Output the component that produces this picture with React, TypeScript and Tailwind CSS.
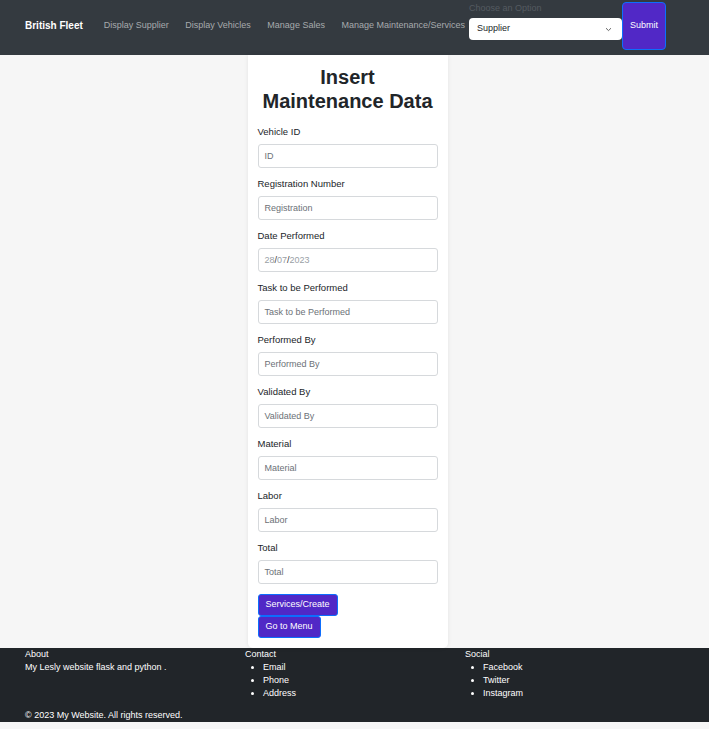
import React from "react";

const fields: { label: string; ph: string; date?: boolean }[] = [
  { label: "Vehicle ID", ph: "ID" },
  { label: "Registration Number", ph: "Registration" },
  { label: "Date Performed", ph: "", date: true },
  { label: "Task to be Performed", ph: "Task to be Performed" },
  { label: "Performed By", ph: "Performed By" },
  { label: "Validated By", ph: "Validated By" },
  { label: "Material", ph: "Material" },
  { label: "Labor", ph: "Labor" },
  { label: "Total", ph: "Total" },
];

export default function App() {
  return (
    <div className="min-h-[729px] bg-[#f6f6f6] text-[#212529]" style={{ fontFamily: '"Liberation Sans", Arial, sans-serif' }}>
      <nav className="h-[55px] bg-[#343a40] flex items-start">
        <div className="flex items-center h-[51px] pl-[25px]">
          <span className="text-white font-bold text-[10px]">British Fleet</span>
          <span className="ml-[21px] text-[#a7aaad] text-[9px]">Display Supplier</span>
          <span className="ml-[16.5px] text-[#a7aaad] text-[9px]">Display Vehicles</span>
          <span className="ml-[16.5px] text-[#a7aaad] text-[9px]">Manage Sales</span>
          <span className="ml-[16.5px] text-[#a7aaad] text-[9px]">Manage Maintenance/Services</span>
        </div>
        <div className="ml-[4px] flex flex-col">
          <span className="text-[9px] text-[#545a61] leading-[13px] mt-[2px]">Choose an Option</span>
          <div className="mt-[3px] w-[153px] h-[22px] bg-white rounded-[4px] flex items-center justify-between pl-[8px] pr-[10px]">
            <span className="text-[9px] text-[#212529]">Supplier</span>
            <svg width="7" height="5" viewBox="0 0 7 5"><path d="M1 1.2 L3.5 3.6 L6 1.2" fill="none" stroke="#555" strokeWidth="0.9" /></svg>
          </div>
        </div>
        <button className="mt-[2px] w-[44px] h-[48px] bg-[#5128c6] border border-[#0d6efd] rounded-[4px] text-white text-[9px]">Submit</button>
      </nav>

      <main className="flex justify-center pr-[14px]">
        <div className="w-[200px] bg-white rounded-b-[5px] shadow-[0_0_4px_rgba(0,0,0,0.08)] px-[10px] pt-[10px] pb-[10px]">
          <h1 className="text-center font-bold text-[20px] leading-[24px] text-[#212529]">Insert<br />Maintenance Data</h1>
          <div className="mt-[13px] flex flex-col">
            {fields.map((f, i) => (
              <div key={i} className={i > 0 ? "mt-[10px]" : ""}>
                <div className="text-[9.5px] leading-[12px] text-[#212529]">{f.label}</div>
                <div className="mt-[6px] h-[24px] border border-[#d6d9dc] rounded-[3px] flex items-center pl-[6px] pt-[1px] text-[9px]">
                  {f.date ? (
                    <span>
                      <span className="text-[#9aa0a6]">28</span>
                      <span className="text-[#333]">/</span>
                      <span className="text-[#9aa0a6]">07</span>
                      <span className="text-[#333]">/</span>
                      <span className="text-[#9aa0a6]">2023</span>
                    </span>
                  ) : (
                    <span className="text-[#6c7177]">{f.ph}</span>
                  )}
                </div>
              </div>
            ))}
          </div>
          <div className="mt-[10px] flex flex-col items-start">
            <button className="h-[22px] px-[7px] bg-[#5128c6] border border-[#0d6efd] rounded-[3px] text-white text-[9px]">Services/Create</button>
            <button className="h-[22px] px-[7px] bg-[#5128c6] border border-[#0d6efd] rounded-[3px] text-white text-[9px]">Go to Menu</button>
          </div>
        </div>
      </main>

      <footer className="bg-[#212529] text-white text-[9px] leading-[13px] px-[25px] h-[74px]">
        <div className="grid grid-cols-[220px_220px_220px]">
          <div>
            <div>About</div>
            <div>My Lesly website flask and python .</div>
          </div>
          <div>
            <div>Contact</div>
            <ul className="list-disc pl-[18px]">
              <li>Email</li>
              <li>Phone</li>
              <li>Address</li>
            </ul>
          </div>
          <div>
            <div>Social</div>
            <ul className="list-disc pl-[18px]">
              <li>Facebook</li>
              <li>Twitter</li>
              <li>Instagram</li>
            </ul>
          </div>
        </div>
        <div className="mt-[9px]">© 2023 My Website. All rights reserved.</div>
      </footer>
    </div>
  );
}
